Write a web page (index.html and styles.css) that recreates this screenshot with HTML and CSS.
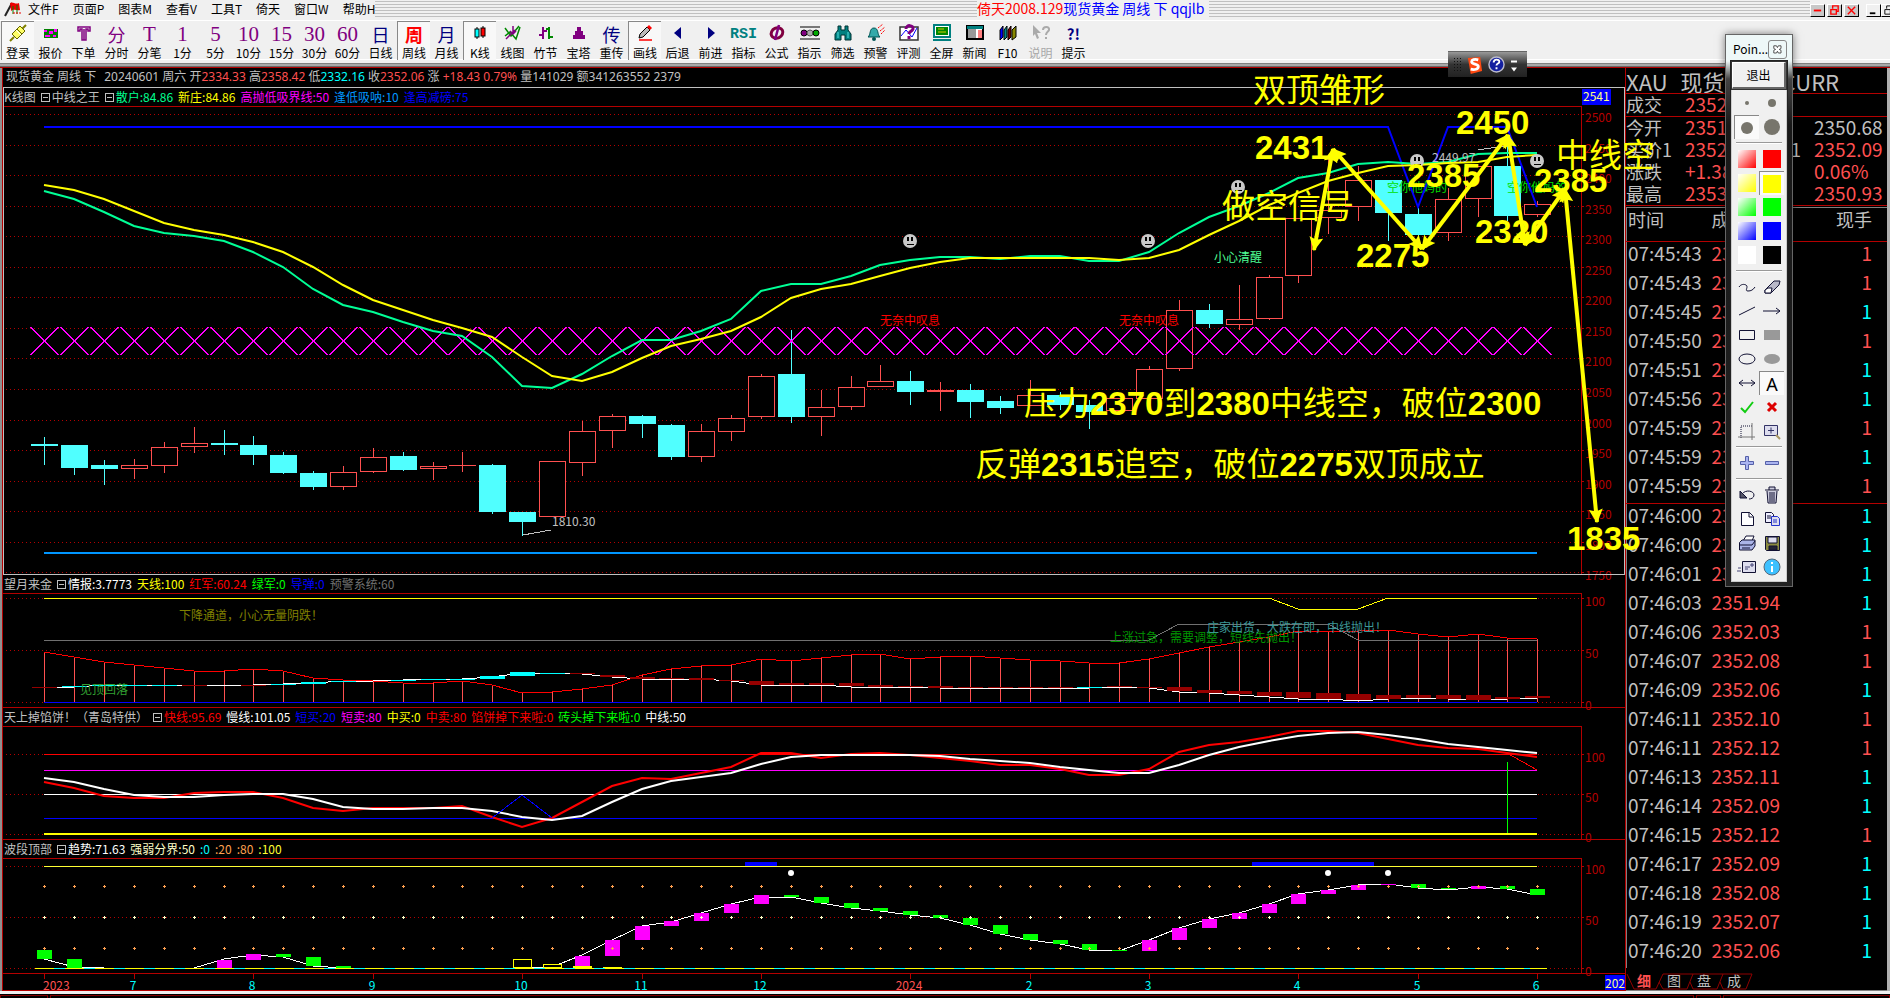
FILE: index.html
```html
<!DOCTYPE html>
<html lang="zh-CN">
<head>
<meta charset="utf-8">
<title>倚天2008.129 现货黄金 周线</title>
<link rel="stylesheet" href="styles.css">
</head>
<body>
<header class="menubar">
  <svg class="app-icon" viewBox="0 0 18 16"><path d="M1 15 8 2" stroke="#222" stroke-width="2"/><path d="M6 2c3-2 5 2 9 0l1 7c-3 1-6-2-9 1z" fill="#e00"/><path d="M9 5v8M13 4v9" stroke="#008000"/><path d="M9 12h8" stroke="#e00" stroke-dasharray="2 1"/></svg>
  <nav class="menus">
    <button>文件F</button><button>页面P</button><button>图表M</button><button>查看V</button><button>工具T</button><button>倚天</button><button>窗口W</button><button>帮助H</button>
  </nav>
  <div class="stripes stripes-left"></div>
  <h1 class="caption"><span class="c-red">倚天2008.129</span>现货黄金 周线 下 qqjlb</h1>
  <div class="stripes stripes-right"></div>
  <div class="winbtns">
    <button class="winbtn red" aria-label="最小化页面"><svg viewBox="0 0 12 12"><path d="M2 6h8" stroke-width="2"/></svg></button>
    <button class="winbtn red" aria-label="还原页面"><svg viewBox="0 0 12 12"><path d="M4 4V1h6v6H8M2 5h6v5H2z" stroke-width="1.5"/></svg></button>
    <button class="winbtn red" aria-label="关闭页面"><svg viewBox="0 0 12 12"><path d="m2 2 8 8M10 2 2 10" stroke-width="1.5"/></svg></button>
  </div>
  <div class="winbtns">
    <button class="winbtn" aria-label="最小化"><svg viewBox="0 0 12 12"><path d="M2 9h6" stroke-width="2"/></svg></button>
    <button class="winbtn" aria-label="还原"><svg viewBox="0 0 12 12"><path d="M4 4V1h6v6H8M2 5h6v5H2z"/></svg></button>
  </div>
</header>
<div class="toolbar" role="toolbar" aria-label="工具">
  <button class="tool pressed"><svg class="ico" viewBox="0 0 20 20"><path d="m2 18 4-4M14 6l4-4" stroke="#808000" stroke-width="2"/><path d="m4 11 5-5 5 5-5 5zM9 6l3-3 5 5-3 3z" fill="#ff6" stroke="#660"/><path d="m8 7 5 5" stroke="#fff"/></svg>登录</button>
  <button class="tool"><svg class="ico" viewBox="0 0 20 20"><path d="M3 6h14v9H3z" fill="#008000"/><path d="M3 7h3v2H3zM8 8h4v3H8zM13 6h3v3h-3zM4 12h5v2H4zM12 12h3v2h-3z" fill="#f0f"/></svg>报价</button>
  <button class="tool"><svg class="ico" viewBox="0 0 20 20"><path d="M4 4h12v4h-2V6h-2v11H8V6H6v2H4zM10 6v11" fill="none" stroke="#800080" stroke-width="1.5"/></svg>下单</button>
  <button class="tool"><span class="glyph">分</span>分时</button>
  <button class="tool"><span class="glyph num">T</span>分笔</button>
  <button class="tool"><span class="glyph num">1</span>1分</button>
  <button class="tool"><span class="glyph num">5</span>5分</button>
  <button class="tool"><span class="glyph num">10</span>10分</button>
  <button class="tool"><span class="glyph num">15</span>15分</button>
  <button class="tool"><span class="glyph num">30</span>30分</button>
  <button class="tool"><span class="glyph num">60</span>60分</button>
  <button class="tool"><span class="glyph navy">日</span>日线</button>
  <button class="tool pressed"><span class="glyph hot">周</span>周线</button>
  <button class="tool"><span class="glyph navy">月</span>月线</button>
  <button class="tool pressed"><svg class="ico" viewBox="0 0 20 20"><path d="M7 4v12M13 3v12" stroke="#000"/><rect x="5" y="6" width="4" height="8" fill="#0ff" stroke="#000"/><rect x="11" y="5" width="4" height="8" fill="#f00" stroke="#000"/></svg>K线</button>
  <button class="tool"><svg class="ico" viewBox="0 0 20 20"><path d="m2 5 6 8 8-10M2 13l5-4 6 7 4-12" fill="none" stroke="#080" stroke-width="1.5"/><path d="M3 16 12 7M10 3v8m-3-3 3 3 3-3" fill="none" stroke="#800080" stroke-width="1.5"/></svg>线图</button>
  <button class="tool"><svg class="ico" viewBox="0 0 20 20"><path d="M7 4v12M3 12h4M7 8h4" stroke="#800080" stroke-width="2"/><path d="M13 4v12M10 6h3M13 14h4" stroke="#080" stroke-width="2"/></svg>竹节</button>
  <button class="tool"><svg class="ico" viewBox="0 0 20 20"><path d="M8 4h4v4h2v4h2v4H4v-4h2V8h2z" fill="#800080"/></svg>宝塔</button>
  <button class="tool"><span class="glyph navy">传</span>重传</button>
  <button class="tool pressed"><svg class="ico" viewBox="0 0 20 20"><path d="m4 15 1-4 7-7 3 3-7 7z" fill="#bbb" stroke="#000"/><path d="m12 4 2-2 3 3-2 2z" fill="#f00"/><path d="M4 17h13" stroke="#f00" stroke-width="1.5"/></svg>画线</button>
  <button class="tool"><svg class="ico" viewBox="0 0 20 20"><path d="M13 4v12l-7-6z" fill="#000080"/></svg>后退</button>
  <button class="tool"><svg class="ico" viewBox="0 0 20 20"><path d="M7 4v12l7-6z" fill="#000080"/></svg>前进</button>
  <button class="tool"><span class="glyph rsi">RSI</span>指标</button>
  <button class="tool"><svg class="ico" viewBox="0 0 20 20"><ellipse cx="10" cy="10" rx="6" ry="5" fill="none" stroke="#800040" stroke-width="3" transform="rotate(-25 10 10)"/><path d="M12 2 8 17" stroke="#800080" stroke-width="2.5"/></svg>公式</button>
  <button class="tool"><svg class="ico" viewBox="0 0 20 20"><path d="M0 4h20M0 16h20" stroke="#000"/><circle cx="4" cy="10" r="3" fill="#800080" stroke="#000"/><circle cx="10" cy="10" r="3" fill="#aaa" stroke="#555"/><circle cx="16" cy="10" r="3" fill="#0a0" stroke="#000"/></svg>指示</button>
  <button class="tool"><svg class="ico" viewBox="0 0 20 20"><path d="M5 3h3v4h4V3h3v4l3 4v6h-6v-5H8v5H2v-6l3-4z" fill="#008080" stroke="#033"/><path d="M5 9v6M15 9v6" stroke="#5dd"/></svg>筛选</button>
  <button class="tool"><svg class="ico" viewBox="0 0 20 20"><path d="M2 14c3-2 1-9 6-9s3 7 6 9z" fill="#3aa" stroke="#055"/><circle cx="8" cy="16" r="2" fill="#055"/><path d="m12 5 5-4M14 8l5-4M15 11l4-4" stroke="#f00" stroke-dasharray="2 1"/></svg>预警</button>
  <button class="tool"><svg class="ico" viewBox="0 0 20 20"><path d="M1 4h18v13H1z" fill="#fff" stroke="#333" stroke-width="1.5"/><path d="m2 13 5-6 6 7 5-9" fill="none" stroke="#00f"/><path d="M7 6c0-5 8-4 7 0-1 3-4 2-4 5m0 2v3" fill="none" stroke="#800080" stroke-width="3"/></svg>评测</button>
  <button class="tool"><svg class="ico" viewBox="0 0 20 20"><path d="M2 2h16v12H2z" fill="#fff" stroke="#008080" stroke-width="2"/><path d="M4 4h12v8H4z" fill="#080"/><path d="M6 6h6M6 9h8" stroke="#cc0"/><path d="M1 17h18" stroke="#008080" stroke-width="2"/></svg>全屏</button>
  <button class="tool"><svg class="ico" viewBox="0 0 20 20"><path d="M2 3h16v13H2z" fill="#fff" stroke="#000" stroke-width="2"/><path d="M2 3h16v3H2z" fill="#008080"/><path d="M3 6h8v9H3z" fill="#999"/><path d="M13 8h4M13 10h4M13 12h4M13 14h4" stroke="#f00"/></svg>新闻</button>
  <button class="tool"><svg class="ico" viewBox="0 0 20 20"><path d="m2 7 3-4v11l-3 3z" fill="#00f" stroke="#000"/><path d="m6 7 3-4v11l-3 3z" fill="#088" stroke="#000"/><path d="m10 7 3-4v11l-3 3z" fill="#800000" stroke="#000"/><path d="m14 7 4-4v11l-4 3z" fill="#880" stroke="#000"/></svg>F10</button>
  <button class="tool off" disabled><svg class="ico" viewBox="0 0 20 20"><path d="m2 2 8 8H6l2 5-2 1-2-5-2 2z" fill="#aaa"/><path d="M12 7c0-4 7-4 6 0-1 2-3 2-3 5m0 2v2" fill="none" stroke="#aaa" stroke-width="2"/></svg>说明</button>
  <button class="tool"><span class="glyph tip">?!</span>提示</button>
</div>

<main class="workspace">
  <section class="charts">
    <div class="quote-line">
      <span>现货黄金 周线 下</span><span class="gap">20240601 周六 开<b class="up">2334.33</b> 高<b class="up">2358.42</b> 低<b class="cy">2332.16</b> 收<b class="up">2352.06</b> 涨 <b class="up">+18.43 0.79%</b> 量141029 额341263552 2379</span>
    </div>
    <div class="legend framed"><span>K线图</span><span><i class="fold"></i>中线之王</span><span style="color:#00ff90"><i class="fold"></i>散户:84.86</span><span style="color:#ff0">新庄:84.86</span><span style="color:#f0f">高抛低吸界线:50</span><span style="color:#0096ff">逢低吸呐:10</span><span style="color:#00f">逢高减磅:75</span></div>
    <svg class="plot" id="kline" viewBox="3 106 1622 469"></svg>
    <div class="legend"><span>望月来金</span><span style="color:#fff"><i class="fold"></i>情报:3.7773</span><span style="color:#ff0">天线:100</span><span style="color:#f00">红军:60.24</span><span style="color:#0f0">绿军:0</span><span style="color:#00f">导弹:0</span><span style="color:#707070">预警系统:60</span></div>
    <svg class="plot" id="moon" viewBox="3 593 1622 115"></svg>
    <div class="legend"><span>天上掉馅饼！（青岛特供）</span><span style="color:#f00"><i class="fold"></i>快线:95.69</span><span style="color:#fff">慢线:101.05</span><span style="color:#00f">短买:20</span><span style="color:#f0f">短卖:80</span><span style="color:#ff0">中买:0</span><span style="color:#f00">中卖:80</span><span style="color:#f00">馅饼掉下来啦:0</span><span style="color:#0f0">砖头掉下来啦:0</span><span style="color:#fff">中线:50</span></div>
    <svg class="plot" id="pie" viewBox="3 726 1622 114"></svg>
    <div class="legend"><span>波段顶部</span><span style="color:#fff"><i class="fold"></i>趋势:71.63</span><span style="color:#ffffc8">强弱分界:50</span><span style="color:#0ff">:0</span><span style="color:#ffa050">:20</span><span style="color:#ffa050">:80</span><span style="color:#ff3">:100</span></div>
    <svg class="plot" id="wave" viewBox="3 858 1622 133"></svg>
  </section>

  <aside class="side">
    <h2 class="symbol"><span>XAU</span><span>现货黄金</span><span>CURR</span></h2>
    <dl class="quotes first"><dt>成交</dt><dd class="up">2352.06</dd></dl>
    <dl class="quotes">
      <dt>今开</dt><dd class="up">2351.15</dd><dt>昨收</dt><dd>2350.68</dd>
      <dt>买价1</dt><dd class="up">2352.06</dd><dt>卖价1</dt><dd class="up">2352.09</dd>
      <dt>涨跌</dt><dd class="up">+1.38</dd><dt>幅度</dt><dd class="up">0.06%</dd>
      <dt>最高</dt><dd class="up">2353.10</dd><dt>最低</dt><dd class="up">2350.93</dd>
    </dl>
    <table class="ticks">
      <thead><tr><th>时间</th><th>成交</th><th class="vol">现手</th></tr></thead>
      <tbody id="ticks"></tbody>
    </table>
    <nav class="tabs">
      <svg class="tab-edges" viewBox="0 0 130 17"><path d="M1 1 8 16H30L37 1H126L120 16H97L94 9M33 9l4 7h24L67 1M64 9l3 7h24L97 1"/></svg>
      <a href="#x" class="on">细</a><a href="#t">图</a><a href="#p">盘</a><a href="#c">成</a>
    </nav>
  </aside>

  <svg class="notes" viewBox="0 67 1890 925">
    <defs><marker id="head" viewBox="0 0 12 12" refX="11" refY="6" markerWidth="16" markerHeight="14" markerUnits="userSpaceOnUse" orient="auto-start-reverse"><path d="M0 0 12 6 0 12 2 6z" fill="#ff0"/></marker></defs>
    <g class="arrows">
      <path d="M1314 249 1333 148"/><path d="M1333 148 1422 248"/><path d="M1422 248 1508 134"/><path d="M1508 134 1525 244"/><path d="M1525 244 1565 188"/><path d="M1565 188 1597 521"/>
    </g>
    <g class="memo">
      <text x="1253" y="101">双顶雏形</text><text x="1255" y="158">2431</text><text x="1456" y="133">2450</text><text x="1407" y="186">2385</text>
      <text x="1534" y="191">2385</text><text x="1556" y="166">中线空</text><text x="1356" y="266">2275</text><text x="1475" y="242">2320</text>
      <text x="1222" y="217">做空信号</text><text x="1024" y="414">压力2370到2380中线空，破位2300</text>
      <text x="975" y="475">反弹2315追空，破位2275双顶成立</text><text x="1567" y="549">1835</text>
    </g>
  </svg>
</main>
<footer class="statusbar"><span></span><span></span><span></span><span></span></footer>

<div class="ime"><span class="grip"></span>
  <svg viewBox="0 0 18 20"><path d="m2 3 13-1 2 15-12 3z" fill="#ff4a12"/><path d="M13 5c-4-1-7 0-7 2 0 3 7 2 7 5 0 3-4 4-8 3" fill="none" stroke="#fff" stroke-width="3"/></svg>
  <svg viewBox="0 0 18 18"><circle cx="9" cy="9" r="8" fill="#1420a0" stroke="#bbc" stroke-width="1.5"/><path d="M6 7c0-4 6-4 6-1 0 2-3 2-3 4m0 2v2" fill="none" stroke="#fff" stroke-width="2"/></svg>
  <svg class="more" viewBox="0 0 8 18"><path d="M1 5h6v2H1zM1 12h6l-3 4z" fill="#fff"/></svg>
</div>

<div class="palette" role="dialog" aria-label="Pointofix">
  <div class="pal-title"><span>Poin...</span><button aria-label="关闭"><svg viewBox="0 0 12 12"><path d="M2 2h3l1 2 1-2h3v3L8 6l2 1v3H7L6 8l-1 2H2V7l2-1-2-1z" fill="#fff" stroke="#444"/></svg></button></div>
  <div class="pal-body">
    <button class="exit">退出</button>
    <div class="grid">
      <button class="cell" aria-label="1"><svg viewBox="0 0 20 20"><circle cx="10" cy="10" r="2" fill="#77756c"/></svg></button>
      <button class="cell" aria-label="2"><svg viewBox="0 0 20 20"><circle cx="10" cy="10" r="4" fill="#77756c"/></svg></button>
      <button class="cell sunk" aria-label="3"><svg viewBox="0 0 20 20"><circle cx="10" cy="10" r="6" fill="#77756c"/></svg></button>
      <button class="cell" aria-label="4"><svg viewBox="0 0 20 20"><circle cx="10" cy="10" r="8" fill="#77756c"/></svg></button>
    </div>
    <hr>
    <div class="grid">
      <button class="cell" aria-label="透明红"><i class="sw g-red"></i></button><button class="cell" aria-label="红"><i class="sw s-red"></i></button>
      <button class="cell" aria-label="透明黄"><i class="sw g-yel"></i></button><button class="cell sunk" aria-label="黄"><i class="sw s-yel"></i></button>
      <button class="cell" aria-label="透明绿"><i class="sw g-grn"></i></button><button class="cell" aria-label="绿"><i class="sw s-grn"></i></button>
      <button class="cell" aria-label="透明蓝"><i class="sw g-blu"></i></button><button class="cell" aria-label="蓝"><i class="sw s-blu"></i></button>
      <button class="cell" aria-label="白"><i class="sw s-wht"></i></button><button class="cell" aria-label="黑"><i class="sw s-blk"></i></button>
    </div>
    <hr>
    <div class="grid line-icons">
      <button class="cell" aria-label="曲线"><svg viewBox="0 0 20 20"><path d="M2 10c2-3 5-3 7-2 3 2-2 6 2 6 3 0 5-1 7-4"/></svg></button>
      <button class="cell" aria-label="橡皮"><svg viewBox="0 0 20 20"><path d="m3 13 9-9h6l-1 4-8 8H3z" fill="#b8b8c8"/><path d="m3 13 3-2h4l-1 5H3z" fill="#fff"/></svg></button>
      <button class="cell" aria-label="直线"><svg viewBox="0 0 20 20"><path d="m2 14 16-8"/></svg></button>
      <button class="cell" aria-label="箭头"><svg viewBox="0 0 20 20"><path d="M1 10h17m-4-3 4 3-4 3"/></svg></button>
      <button class="cell" aria-label="矩形"><svg viewBox="0 0 20 20"><path d="M2.500 5.500h15v9h-15z"/></svg></button>
      <button class="cell" aria-label="实心矩形"><svg viewBox="0 0 20 20"><path d="M2 5h16v10H2z" fill="#999" stroke="none"/></svg></button>
      <button class="cell" aria-label="椭圆"><svg viewBox="0 0 20 20"><ellipse cx="10" cy="10" rx="8" ry="5"/></svg></button>
      <button class="cell" aria-label="实心椭圆"><svg viewBox="0 0 20 20"><ellipse cx="10" cy="10" rx="8" ry="5" style="fill:#999;stroke:none"/></svg></button>
      <button class="cell" aria-label="双箭头"><svg viewBox="0 0 20 20"><path d="M2 10h16M6 7l-4 3 4 3M14 7l4 3-4 3"/></svg></button>
      <button class="cell sunk letter">A</button>
      <button class="cell" aria-label="确定"><svg viewBox="0 0 20 20"><path d="m4 11 4 4 8-10" style="stroke:#1c1;stroke-width:2"/></svg></button>
      <button class="cell" aria-label="取消"><svg viewBox="0 0 20 20"><path d="m6 6 8 8M14 6l-8 8" style="stroke:#d00;stroke-width:3"/></svg></button>
      <button class="cell" aria-label="裁剪"><svg viewBox="0 0 20 20"><path d="M4 17V5h12" stroke-dasharray="1 1"/><path d="M15 2v17M1 16h17" style="stroke:#777"/></svg></button>
      <button class="cell" aria-label="放大"><svg viewBox="0 0 20 20"><path d="M2.500 4.500h13v10h-13z" fill="#dde" style="stroke:#336"/><path d="M6 9.500h6M9 6.500v6" style="stroke:#336"/><path d="m14 14 4 4" style="stroke:#a96;stroke-width:2"/></svg></button>
    </div>
    <hr>
    <div class="grid">
      <button class="cell" aria-label="加"><svg viewBox="0 0 20 20"><path d="M8.500 3.500h3v5h5v3h-5v5h-3v-5h-5v-3h5z" fill="#aab4f0" stroke="#5560a8"/></svg></button>
      <button class="cell" aria-label="减"><svg viewBox="0 0 20 20"><path d="M3.500 8.500h13v3h-13z" fill="#aab4f0" stroke="#5560a8"/></svg></button>
    </div>
    <hr>
    <div class="grid line-icons">
      <button class="cell" aria-label="撤销"><svg viewBox="0 0 20 20"><path d="M5 9c4-5 12-3 12 1 0 3-3 4-5 4"/><path d="M3 6v7h7z" fill="#556"/></svg></button>
      <button class="cell" aria-label="删除"><svg viewBox="0 0 20 20"><path d="M3 5h14M7 5V2h6v3M5 6l1 12h8l1-12" fill="#ccd"/><path d="M8 7v10M10 7v10M12 7v10"/></svg></button>
      <button class="cell" aria-label="新建"><svg viewBox="0 0 20 20"><path d="M4.500 3.500h8l4 4v9h-12z" fill="#fff"/><path d="M12 3v5h4"/></svg></button>
      <button class="cell" aria-label="复制"><svg viewBox="0 0 20 20"><path d="M3.500 3.500h6l2 2v8h-8zM5 7h4M5 9h4" fill="#eef"/><path d="M9.500 7.500h6l2 2v7h-8zM11 11h4M11 13h4" fill="#dde" style="stroke:#23c"/></svg></button>
      <button class="cell" aria-label="打印"><svg viewBox="0 0 20 20"><path d="m6 8 3-5h8l-2 5" fill="#fff"/><path d="M2.500 9.500 5 7h13v6l-3 4H2.500z" fill="#aab4e8"/><path d="M3 12h12l3-4M5 15h8"/></svg></button>
      <button class="cell" aria-label="保存"><svg viewBox="0 0 20 20"><path d="M3.500 3.500h14v14h-13l-1-1z" fill="#8a8a40"/><path d="M6 4h9v6H6z" fill="#dde"/><path d="M7 13h8v4H7z" fill="#223"/></svg></button>
      <button class="cell" aria-label="邮件"><svg viewBox="0 0 20 20"><path d="M5.500 4.500h13v11h-13z" fill="#dde"/><path d="M14 7h2v2h-2zM8 10h5M8 12h3M1 11h3M0 14h4" style="stroke:#447"/></svg></button>
      <button class="cell" aria-label="信息"><svg viewBox="0 0 20 20"><circle cx="10" cy="10" r="8" fill="#3cc0ff" style="stroke:#567"/><path d="M10 9v6M10 5v2" style="stroke:#fff;stroke-width:2"/></svg></button>
    </div>
  </div>
</div>
<script src="charts.js"></script>
</body>
</html>
```

FILE: styles.css
```css
* { box-sizing: border-box; }
html { background: #000; }
body { margin: 0; min-height: 100vh; font: 12px/16px "Noto Sans CJK SC", "Noto Sans", sans-serif; color: #c0c0c0; background: #000; overflow-x: hidden; }
button { font: inherit; color: inherit; border: 0; background: none; padding: 0; margin: 0; }
svg { display: block; }

.menubar { display: flex; align-items: center; height: 20px; padding: 0 0 3px 4px; background: #f0f0f0; color: #000; overflow: hidden; }
.app-icon { width: 18px; height: 16px; flex: none; }
.menus { display: flex; gap: 14px; padding-left: 6px; flex: none; white-space: nowrap; }
.stripes { height: 16px; background: repeating-linear-gradient(#c0c0c0 0 1px, #f0f0f0 1px 3px); }
.stripes-left { flex: 596; }
.stripes-right { flex: 595; }
.caption { margin: 0; padding-right: 5px; font-size: 14px; font-weight: 400; line-height: 17px; color: #00f; white-space: nowrap; }
.c-red { color: #f00; }
.winbtns { display: flex; gap: 2px; margin-right: 7px; flex: none; padding-top: 4px; }
.winbtns:last-child { margin-right: -6px; gap: 0; }
.winbtn { width: 15px; height: 13px; background: #f0f0f0; border: 1px solid #fff; border-right-color: #000; border-bottom-color: #000; display: grid; place-items: center; }
.winbtn.red { background: #c8c8c8; }
.winbtn svg { width: 11px; height: 11px; fill: none; stroke: #000; }
.winbtn.red svg { stroke: #f00; }

.toolbar { display: flex; height: 47px; padding: 1px 0 7px 1px; background: linear-gradient(#fff 0 1px, #f0f0f0 1px 39px, #fff 39px 40px, #f0f0f0 40px 43px, #808080 43px 44px, #a8a8a8 44px 46px, #686868 46px); color: #000; }
.tool { flex: none; width: 33px; height: 39px; display: flex; flex-direction: column; align-items: center; justify-content: flex-end; line-height: 14px; white-space: nowrap; }
.tool.pressed { background: #f8f8f8; border-left: 1px solid #888; border-top: 1px solid #888; }
.tool.off { color: #a8a8a8; }
.ico { width: 20px; height: 20px; margin-bottom: 3px; }
.glyph { font-size: 18px; line-height: 20px; height: 22px; color: #800080; }
.num { font: 21px/21px "Liberation Serif", serif; height: 22px; }
.navy { color: #000080; }
.hot { color: #f00; font-weight: 700; }
.rsi { font: bold 15px/21px "Liberation Mono", monospace; color: #008080; }
.tip { color: #000080; font-weight: 700; font-size: 15px; }

.workspace { position: relative; display: grid; grid-template-columns: minmax(0, 1fr) 265px; border-top: 1px solid #b40000; }
.charts { border-left: 2px solid #909090; box-shadow: inset 1px 0 0 #b40000; padding-left: 1px; min-width: 0; }
.quote-line { height: 19px; font-family: "Noto Sans", "Noto Sans CJK SC", sans-serif; line-height: 18px; padding-left: 3px; white-space: nowrap; overflow: hidden; }
.quote-line .gap { padding-left: 8px; }
.quote-line b { font-weight: 400; }
.up { color: #ff5050; }
.cy { color: #0ff; }
.legend { display: flex; gap: 5px; height: 18px; line-height: 17px; padding-left: 1px; white-space: nowrap; overflow: hidden; }
.legend.framed { height: 19px; line-height: 18px; border: 1px solid #c0c0c0; border-bottom: 0; padding-left: 0; }
.fold { display: inline-block; width: 9px; height: 9px; margin-right: 2px; border: 1px solid #c0c0c0; background: linear-gradient(#c0c0c0, #c0c0c0) center / 5px 1px no-repeat; }
.plot { width: 100%; height: auto; font-size: 12px; overflow: visible; }
.crisp { shape-rendering: crispEdges; }
.notes { position: absolute; left: 0; top: 0; width: 100%; pointer-events: none; }
.arrows path { stroke: #ff0; stroke-width: 4; fill: none; marker-start: url(#head); marker-end: url(#head); }
.memo text { font: 700 33px "Liberation Sans", "Noto Sans CJK SC", sans-serif; fill: #ff0; }
.memo .han { font-weight: 400; }

.side { display: flex; flex-direction: column; border-left: 1px solid #b40000; border-right: 3px solid #b0b0b0; font-size: 19px; }
.symbol { display: flex; gap: 13px; margin: 0; height: 26px; font-size: 22px; line-height: 26px; font-weight: 400; border-bottom: 1px solid #b40000; white-space: nowrap; overflow: hidden; }
.quotes { display: grid; grid-template-columns: 59px 70px 59px 1fr; grid-auto-rows: 22px; margin: 0; border-bottom: 1px solid #b40000; line-height: 20px; overflow: hidden; }
.quotes dt { font-size: 18px; }
.quotes dd { margin: 0; }
.ticks { border-collapse: collapse; width: 100%; margin-top: 1px; border-top: 1px solid #808080; border-left: 1px solid #808080; table-layout: fixed; }
.ticks th { height: 34px; padding: 0 0 11px 1px; font-size: 18px; font-weight: 400; text-align: left; line-height: 22px; border-bottom: 1px solid #b40000; }
.ticks td { height: 29px; padding: 0 0 7px 1px; line-height: 22px; }
.ticks th:first-child { width: 84px; }
.ticks .vol { text-align: right; padding-right: 15px; }
.ticks .minute td { border-top: 1px solid #b40000; }
.tabs { position: relative; display: flex; margin-top: auto; padding-left: 3px; font-size: 14px; line-height: 15px; border-bottom: 1px solid #808080; }
.tabs a { width: 30px; height: 17px; text-align: center; color: #c0c0c0; text-decoration: none; }
.tabs .on { color: #ff5050; font-weight: 700; }
.tab-edges { position: absolute; left: 0; top: 0; width: 130px; height: 17px; fill: none; stroke: #900000; }

.statusbar { display: grid; grid-template-columns: 47fr 1608fr 25fr 163fr; gap: 2px; height: 7px; border-top: 3px solid #f0f0f0; background: #000; }
.statusbar span { border: 1px solid #800000; border-bottom: 0; margin-top: 1px; }

.ime { position: absolute; top: 51px; left: 1448px; width: 79px; height: 26px; display: flex; align-items: center; gap: 5px; padding: 0 5px; background: linear-gradient(#999, #333 50%, #222); border-top: 1px solid #666; }
.ime svg { width: 17px; height: 19px; }
.ime .more { width: 8px; }
.grip { width: 8px; height: 16px; background: radial-gradient(#111 1px, transparent 1px) 0 0 / 3px 3px; }

.palette { position: absolute; top: 34px; left: 1725px; width: 68px; padding: 2px 5px 4px; border: 1px solid #666; box-shadow: 0 0 8px rgba(0, 0, 0, .5); background: linear-gradient(#eef8f8 0 26px, #444 44px, #181818 90px, #222); color: #000; }
.pal-title { display: flex; align-items: center; justify-content: space-between; height: 24px; padding-left: 2px; }
.pal-title button { width: 19px; height: 19px; padding: 3px; border: 1px solid #888; border-radius: 3px; }
.pal-body { border: 1px solid #ccc; outline: 1px solid #222; background: #f0f0f0; display: flex; flex-direction: column; padding-bottom: 2px; }
.exit { height: 27px; margin-bottom: 2px; border: 1px solid #fff; border-right: 2px solid #666; border-bottom: 2px solid #666; outline: 1px solid #333; }
.grid { display: grid; grid-template-columns: 25px 25px; justify-content: center; }
.cell { height: 24px; display: grid; place-items: center; }
.cell svg { width: 20px; height: 20px; }
.cell.sunk { background: #fafafa; border-left: 1px solid #888; border-top: 1px solid #888; }
.letter { font: 18px/22px "Noto Sans", sans-serif; }
.pal-body hr { width: 46px; height: 2px; margin: 3px auto; border: 0; border-top: 1px solid #999; border-bottom: 1px solid #fff; }
.line-icons svg { fill: none; stroke: #113; }
.sw { display: block; width: 18px; height: 18px; }
.g-red { background: linear-gradient(135deg, #fff, #f00); }
.g-yel { background: linear-gradient(135deg, #fff, #ff0); }
.g-grn { background: linear-gradient(135deg, #fff, #0f0); }
.g-blu { background: linear-gradient(135deg, #fff, #00f); }
.s-red { background: #f00; }
.s-yel { background: #ff0; }
.s-grn { background: #0f0; }
.s-blu { background: #00f; }
.s-wht { background: #fff; }
.s-blk { background: #000; }
```

FILE: charts.js
```javascript
const NS = 'http://www.w3.org/2000/svg';
const FIRST = 44.4, STEP = 29.857, LAST = 50, AXIS = 1581;
const X = i => Math.round(FIRST + i * STEP);
const RED = '#b40000', AXIS_TEXT = '#b40000';

function add(svg, tag, attrs, text) {
  const el = document.createElementNS(NS, tag);
  for (const k in attrs) el.setAttribute(k, attrs[k]);
  if (text !== undefined) el.textContent = text;
  svg.appendChild(el);
  return el;
}
const rect = (s, x, y, w, h, fill) => add(s, 'rect', { x, y, width: w, height: h, fill });
const box = (s, x, y, w, h, stroke) => add(s, 'rect', { x: x + 0.5, y: y + 0.5, width: w - 1, height: h - 1, fill: '#000', stroke, class: 'crisp' });
const label = (s, x, y, fill, text, anchor = 'start') => add(s, 'text', { x, y: y + 4, fill, 'text-anchor': anchor }, text);
const line = (s, pts, stroke, w = 1, dash = 'none') => add(s, 'polyline', {
  points: pts.map(p => p.join(',')).join(' '), fill: 'none', stroke, 'stroke-width': w, 'stroke-dasharray': dash, class: w > 1 ? 'bold' : 'crisp' });
const series = (s, ys, stroke, w) => line(s, ys.map((y, i) => [X(i), y]), stroke, w);
const level = (s, y, stroke, h = 1) => rect(s, X(0), y, X(LAST) - X(0), h, stroke);

function frame(s, top, bottom, grid) {
  rect(s, 3, top, AXIS - 3, 1, RED);
  rect(s, AXIS, top, 1, bottom - top, RED);
  grid.forEach(([y, t]) => {
    line(s, [[6, y + 0.5], [AXIS, y + 0.5]], RED, 1, '1 3');
    rect(s, AXIS, y, 3, 1, RED);
    label(s, 1585, y + 4, AXIS_TEXT, t);
  });
}
function face(s, x, y) {
  add(s, 'ellipse', { cx: x, cy: y, rx: 7, ry: 7, fill: '#c8c8c8' });
  rect(s, x - 3, y - 4, 2, 4, '#000');
  rect(s, x + 1, y - 4, 2, 4, '#000');
  rect(s, x - 3, y + 3, 7, 1, '#000');
}

/* candlesticks: direction, body top, body bottom, high, low */
const candles = [
  'd444 446 437 465', 'd445 468 445 475', 'd465 469 460 485', 'u465 469 459 479', 'u447 466 442 473', 'u443 447 427 453',
  'd443 445 430 455', 'd445 455 436 465', 'd455 473 452 474', 'd473 487 471 490', 'u472 487 466 490', 'u457 472 448 473',
  'd456 470 452 471', 'u466 469 462 480', 'u465 466 452 472', 'd465 512 464 514', 'd512 522 512 536', 'u461 517 461 517',
  'u431 463 421 476', 'u416 431 414 448', 'd416 424 415 438', 'd425 457 424 460', 'u431 457 424 462', 'u418 432 415 441',
  'u376 417 374 419', 'd374 417 330 423', 'u407 417 390 436', 'u387 407 376 410', 'u381 387 365 387', 'd381 392 371 405',
  'u390 392 382 411', 'd390 402 384 418', 'd401 408 396 414', 'u395 406 380 406', 'd395 405 392 410', 'd405 412 400 429',
  'u398 411 398 411', 'u369 399 366 399', 'u310 369 300 371', 'd310 324 304 328', 'u319 325 285 330', 'u277 319 275 320',
  'u218 276 218 283', 'u210 218 159 234', 'u180 207 166 221', 'd180 213 180 241', 'd214 235 208 243', 'u199 233 188 241',
  'u166 199 166 217', 'd166 216 135 221', 'u204 215 201 217'
];
const fast = [191,199,212,226,233,236,241,252,267,289,305,312,322,331,336,357,386,388,374,356,340,340,331,319,291,284,284,276,265,260,257,257,259,256,256,261,261,252,233,217,206,193,178,173,164,162,164,162,154,153,153];
const slow = [185,190,199,211,223,230,235,242,252,267,285,300,310,320,328,337,357,376,381,372,358,346,339,331,317,298,289,284,276,268,262,258,258,258,258,258,260,258,250,235,221,205,193,181,173,166,165,163,162,157,155];

(function kline() {
  const s = document.getElementById('kline');
  const grid = [];
  for (let i = 0; i <= 15; i++) grid.push([Math.round(114 + i * 30.55), 2500 - i * 50]);
  frame(s, 106, 574, grid);
  rect(s, 3, 574, 1622, 1, '#c0c0c0');
  rect(s, 3, 106, 1, 468, '#c0c0c0');
  rect(s, 1624, 106, 1, 468, '#c0c0c0');
  candles.forEach((c, i) => {
    const [t, b, h, l] = c.slice(1).split(' ').map(Number);
    const up = c[0] === 'u', col = up ? '#ff5050' : '#50ffff', x = X(i);
    rect(s, x, h, 1, l - h, col);
    if (up && b - t > 2) box(s, x - 13, t, 27, b - t, col);
    else rect(s, x - 13, t, 27, b - t, col);
  });
  for (let i = 0; i <= LAST; i++) {
    const x = X(i) + 0.5;
    line(s, [[x - 14, 327], [x + 14, 355]], '#f0f');
    line(s, [[x - 14, 355], [x + 14, 327]], '#f0f');
  }
  const cap = Array.from({ length: 51 }, (_, i) => (i === 46 || i === 50 ? 207 : 127));
  label(s, 1387, 188, '#00e000', '空你他妈的');
  label(s, 1507, 188, '#00e000', '空你他妈的');
  series(s, cap, '#00f', 2);
  series(s, fast, '#00ff96', 2);
  series(s, slow, '#ff0', 2);
  level(s, 552, '#0096ff', 2);
  [[910, 241], [1148, 241], [1238, 187], [1417, 161], [1537, 161]].forEach(p => face(s, ...p));
  label(s, 880, 321, '#f00', '无奈中叹息');
  label(s, 1119, 321, '#f00', '无奈中叹息');
  label(s, 1214, 258, '#50ff96', '小心清醒');
  label(s, 1432, 158, '#c0c0c0', '2449.97');
  label(s, 552, 522, '#c0c0c0', '1810.30');
  line(s, [[523, 535], [551, 530]], '#c0c0c0');
  line(s, [[1478, 150], [1504, 146]], '#c0c0c0');
  rect(s, 1582, 89, 29, 16, '#00f');
  label(s, 1583, 97, '#ffff80', '2541');
})();

(function moon() {
  const s = document.getElementById('moon');
  frame(s, 593, 707, [[598, '100'], [650, '50'], [702, '0']]);
  const army = [652,657,662,665,668,671,671,669,671,678,680,681,683,683,681,685,693,692,689,685,675,669,666,665,659,661,658,655,654,659,657,656,658,660,661,663,663,659,653,647,642,637,631,632,631,630,634,637,634,638,639];
  const info = [687,687,685,685,685,685,686,685,684,683,681,681,680,679,679,677,673,673,674,677,679,679,679,681,685,685,685,687,687,687,688,688,688,688,688,688,687,688,692,693,695,697,699,699,701,699,698,699,700,699,698];
  army.forEach((y, i) => rect(s, X(i), y, 1, 702 - y, '#ff5050'));
  series(s, army, '#f00', 1);
  series(s, info, '#fff', 1);
  const cyan = { 1: [686, 1], 2: [685, 1], 3: [685, 1], 4: [685, 1], 8: [684, 1], 9: [682, 2], 10: [681, 1], 12: [680, 1], 13: [679, 1], 14: [679, 1], 15: [676, 3], 16: [672, 4], 17: [673, 1], 35: [687, 1] };
  const dark = { 0: [687, 1], 5: [685, 1], 7: [685, 1], 18: [673, 1], 19: [675, 2], 20: [677, 2], 21: [678, 1], 22: [678, 2], 23: [680, 1], 24: [681, 4], 25: [683, 2], 26: [683, 2], 27: [683, 3], 28: [685, 2], 29: [686, 1], 30: [686, 2], 31: [687, 1], 32: [687, 1], 33: [687, 1], 34: [687, 1], 36: [686, 1], 37: [687, 1], 38: [687, 4], 39: [690, 3], 40: [691, 3], 41: [692, 4], 42: [692, 6], 43: [693, 6], 44: [694, 6], 45: [695, 4], 46: [695, 3], 47: [695, 4], 48: [695, 5], 49: [697, 2], 50: [696, 2] };
  for (const i in cyan) rect(s, X(+i) - 12, cyan[i][0], 25, cyan[i][1], '#0ff');
  for (const i in dark) rect(s, X(+i) - 12, dark[i][0], 25, dark[i][1], '#960000');
  series(s, Array.from({ length: 51 }, (_, i) => (i >= 42 && i <= 44 ? 609 : 598)), '#ff0', 1);
  series(s, Array.from({ length: 51 }, (_, i) => (i >= 38 && i <= 43 ? 624 : 640)), '#707070', 1);
  level(s, 702, '#00f');
  label(s, 179, 616, '#808000', '下降通道，小心无量阴跌！');
  label(s, 80, 690, '#32a032', '见顶回落');
  label(s, 1110, 638, '#009600', '上涨过急，需要调整，短线先抛出！');
  label(s, 1207, 628, '#3c9696', '庄家出货，大跌在即，中线抛出！');
  rect(s, 3, 707, 1622, 1, RED);
})();

(function pie() {
  const s = document.getElementById('pie');
  frame(s, 726, 839, [[754, '100'], [794, '50'], [834, '0']]);
  level(s, 754, '#f00');
  level(s, 770, '#f0f');
  level(s, 794, '#fff');
  level(s, 818, '#00f');
  level(s, 833, '#ff0', 2);
  series(s, [782,788,796,798,798,793,792,792,798,808,811,808,808,808,806,817,827,818,802,786,778,779,773,767,753,753,758,754,753,755,758,761,765,765,769,775,775,769,752,745,742,737,731,731,733,739,745,748,749,753,757], '#f00', 2);
  series(s, [778,782,789,795,797,797,795,794,794,799,807,809,809,808,808,811,817,820,816,802,789,781,777,773,764,757,755,755,755,755,756,759,761,763,767,770,773,773,765,755,747,741,736,733,732,735,739,744,747,750,753], '#fff', 2);
  line(s, [[X(15), 818], [X(16), 795], [X(17), 818]], '#00f');
  line(s, [[X(49), 753], [X(50), 770]], '#f00');
  rect(s, X(49), 762, 1, 71, '#0f0');
  rect(s, 3, 839, 1622, 1, RED);
})();

(function wave() {
  const s = document.getElementById('wave');
  frame(s, 858, 973, [[866, '100'], [917, '50'], [968, '0']]);
  level(s, 866, '#ff3');
  const plus = (x, y, c) => { rect(s, x - 1, y, 3, 1, c); rect(s, x, y - 1, 1, 3, c); };
  const trend = [959,967,968,968,968,968,959,955,957,966,968,968,968,968,968,968,968,967,955,940,926,922,913,904,897,897,903,908,911,915,918,925,934,940,944,950,951,940,928,919,913,904,894,890,885,884,888,890,887,889,895];
  const blocks = 'g0 950 959,g1 959 968,m6 960 968,m7 954 960,g8 954 957,g9 957 966,g10 966 968,m18 956 966,m19 940 956,m20 926 940,m21 921 926,m22 913 921,m23 904 913,m24 895 904,g25 895 897,g26 897 903,g27 903 908,g28 908 911,g29 911 915,g30 915 918,g31 918 925,g32 925 934,g33 934 940,g34 940 944,g35 944 950,g36 950 951,m37 940 951,m38 928 940,m39 919 928,m40 913 919,m41 904 913,m42 894 904,m43 890 894,m44 885 890,m45 884 885,g46 884 888,g47 888 889,m48 886 889,g49 886 889,g50 889 895';
  series(s, trend, '#fff', 1);
  blocks.split(',').forEach(b => {
    const [i, t, e] = b.slice(1).split(' ').map(Number);
    rect(s, X(i) - 7, t, 15, e - t, b[0] === 'g' ? '#0f0' : '#f0f');
  });
  box(s, X(16) - 9, 959, 19, 9, '#ff0');
  box(s, X(17) - 9, 964, 19, 4, '#ff0');
  rect(s, X(18) - 9, 966, 19, 2, '#ff0');
  rect(s, X(19) - 9, 967, 19, 1, '#ff0');
  for (let i = 0; i <= LAST; i++) {
    plus(X(i), 886, '#ffa050');
    plus(X(i), 917, '#ffffc8');
    plus(X(i), 948, '#ffa050');
  }
  rect(s, 35, 968, 1512, 1, '#ff0');
  line(s, [[54, 968.5], [1530, 968.5]], '#0ff', 1, '11 19');
  rect(s, 745, 862, 32, 4, '#00f');
  rect(s, 1252, 862, 122, 4, '#00f');
  [25, 43, 45].forEach(i => add(s, 'ellipse', { cx: X(i), cy: 873, rx: 3, ry: 3, fill: '#fff' }));
  rect(s, 3, 973, 1622, 1, RED);
  [[3, '7'], [7, '8'], [11, '9'], [16, '10'], [20, '11'], [24, '12'], [29, '2024'], [33, '2'], [37, '3'], [42, '4'], [46, '5'], [50, '6']].forEach(([i, t]) => {
    rect(s, X(i), 973, 1, 6, RED);
    label(s, X(i) - 1, 986, t === '2024' ? '#ff5050' : '#0ff', t, 'middle');
  });
  rect(s, X(0), 973, 1, 6, RED);
  label(s, 43, 986, '#ff5050', '2023');
  rect(s, 1605, 975, 20, 16, '#00f');
  label(s, 1605, 984, '#ffff80', '202');
  rect(s, 3, 990, 1622, 1, RED);
})();

/* time, price, direction of the lot */
const ticks = `45:43 2352.06 u|45:43 2352.08 u|45:45 2352.04 d|45:50 2352.09 u|45:51 2352.05 d|45:56 2352.02 d|45:59 2352.07 u|45:59 2352.03 d|45:59 2352.08 u|46:00 2352.05 d|46:00 2352.01 d|46:01 2351.98 d|46:03 2351.94 d|46:06 2352.03 u|46:07 2352.08 u|46:09 2352.06 d|46:11 2352.10 u|46:11 2352.12 u|46:13 2352.11 d|46:14 2352.09 d|46:15 2352.12 u|46:17 2352.09 d|46:18 2352.08 d|46:19 2352.07 d|46:20 2352.06 d`;
document.getElementById('ticks').innerHTML = ticks.split('|').map((row, i) => {
  const [t, p, d] = row.split(' ');
  return `<tr${i === 9 ? ' class="minute"' : ''}><td>07:${t}</td><td class="up">${p}</td><td class="vol ${d === 'u' ? 'up' : 'cy'}">1</td></tr>`;
}).join('');

/* overlay text: regular weight for Chinese runs, bold for digits */
document.querySelectorAll('.memo text').forEach(t => {
  t.innerHTML = t.textContent.replace(/[^0-9]+/g, m => `<tspan class="han">${m}</tspan>`);
});
```
